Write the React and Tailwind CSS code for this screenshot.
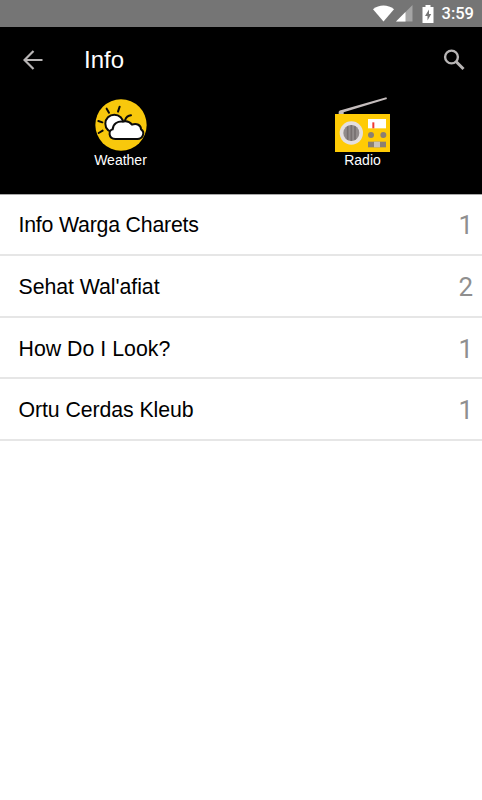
const rows = [
  { title: "Info Warga Charets", count: 1, tracking: "tracking-[-0.2px]" },
  { title: "Sehat Wal'afiat", count: 2, tracking: "tracking-[-0.05px]" },
  { title: "How Do I Look?", count: 1, tracking: "tracking-[0.02px]" },
  { title: "Ortu Cerdas Kleub", count: 1, tracking: "tracking-[-0.08px]" },
];

function StatusBar() {
  return (
    <div className="flex h-[27px] items-center justify-end bg-[#757575] pr-[8px] text-white">
      <svg className="mr-[2px] h-[17px] w-[21px]" viewBox="0 0 21 17" fill="currentColor">
        <path d="M10.5 16.5 0 4.2C6-.6 15-.6 21 4.2Z" />
      </svg>
      <svg className="mr-[9px] h-[17px] w-[17px]" viewBox="0 0 17 17" fill="currentColor">
        <path d="M0 16.5 16.5 0v16.5Z" opacity="0.35" />
        <path d="M0 16.5 9.5 7v9.5Z" />
      </svg>
      <svg className="mr-[8px] h-[18px] w-[12px]" viewBox="0 0 12 18">
        <path d="M3.5 0h5v2H11.5v16H.5V2h3Z" fill="#fff" />
        <path d="M7 4.5 3 11h2.5v4.5L9.2 9H7Z" fill="#757575" />
      </svg>
      <span className="pt-px font-['Roboto',sans-serif] text-[16.5px] leading-[26px] font-medium">3:59</span>
    </div>
  );
}

function WeatherIcon() {
  return (
    <svg className="h-[52px] w-[52px]" viewBox="30 27 156 156" fill="none">
      <circle cx="108" cy="105" r="77" fill="#f8c80c" />
      <g stroke="#0b0b0b" strokeWidth="6" strokeLinecap="round" strokeLinejoin="round">
        <path d="M65 56l7 12M99 65l5-15M40 93l12 4M41 129l12-7" />
        <circle cx="88" cy="101" r="27" fill="#fff" />
        <path d="M120 91q5-14 18-15" />
        <path
          d="M91 147C69 147 70 120 83 118C84 101 99 92 115 95C128 91 136 98 141 104C155 98 168 106 168 118C181 126 174 147 157 147Z"
          fill="#fff"
        />
      </g>
    </svg>
  );
}

function RadioIcon() {
  return (
    <svg className="h-[56px] w-[56px]" viewBox="27 21 168 168">
      <path d="M41 74V65q2-5 9-5L184 22l2 5L56 67v7Z" fill="#c5bdbd" />
      <path d="M30 72h165v114H30Z" fill="#ffcb05" />
      <circle cx="79" cy="129" r="35" fill="#e4dfdf" />
      <circle cx="79" cy="129" r="24" fill="#918b8b" />
      <path d="M68 109v40M79 105v48M90 109v40" stroke="#777070" strokeWidth="5" />
      <path d="M129 87h54v28h-54Z" fill="#fff" />
      <path d="M145 97v18" stroke="#f03a32" strokeWidth="6" />
      <circle cx="138" cy="135" r="9" fill="#8b8072" />
      <circle cx="175" cy="135" r="9" fill="#8b8072" />
      <path d="M129 155h54v17h-54Z" fill="#8b8072" />
      <path d="M147 155h18v17h-18Z" fill="#c9c3ba" />
    </svg>
  );
}

function Header() {
  return (
    <header className="h-[167.6px] border-b border-[#a8a8a8] bg-black text-white">
      <div className="flex h-[66px] items-center">
        <svg className="ml-[23px] h-[20px] w-[20px]" viewBox="0 0 20 20" fill="none" stroke="#b8b5b5" strokeWidth="2.2">
          <path d="M19.5 10H1.5M10.5 1 1.5 10l9 9" />
        </svg>
        <h1 className="ml-[41px] font-['Liberation_Sans',sans-serif] text-[24px] leading-8">Info</h1>
        <svg className="mr-[17px] ml-auto h-[22px] w-[22px]" viewBox="0 0 22 22" fill="none" stroke="#b8b5b5">
          <circle cx="8.5" cy="8" r="6.4" strokeWidth="2.4" />
          <path d="m13 12.5 7.5 7.5" strokeWidth="3" />
        </svg>
      </div>
      <div className="grid grid-cols-2 pt-[4px] font-['Liberation_Sans',sans-serif] text-[14px] leading-4">
        <div className="flex flex-col items-center pt-[2px]">
          <WeatherIcon />
          <span className="mt-px">Weather</span>
        </div>
        <div className="flex flex-col items-center">
          <RadioIcon />
          <span className="-mt-px pl-[2px]">Radio</span>
        </div>
      </div>
    </header>
  );
}

function App() {
  return (
    <div className="min-h-screen bg-white">
      <StatusBar />
      <Header />
      <ul className="font-['Liberation_Sans',sans-serif]">
        {rows.map((row) => (
          <li
            key={row.title}
            className="flex h-[61.6px] items-center justify-between border-b-2 border-[#e6e6e6] pt-[2px] pr-[9px] pl-[18.5px]"
          >
            <span className={`text-[21.3px] leading-[30px] ${row.tracking}`}>{row.title}</span>
            <span className="font-['Roboto',sans-serif] text-[26px] leading-[30px] text-[#8f8f8f]">{row.count}</span>
          </li>
        ))}
      </ul>
    </div>
  );
}

export default App;
